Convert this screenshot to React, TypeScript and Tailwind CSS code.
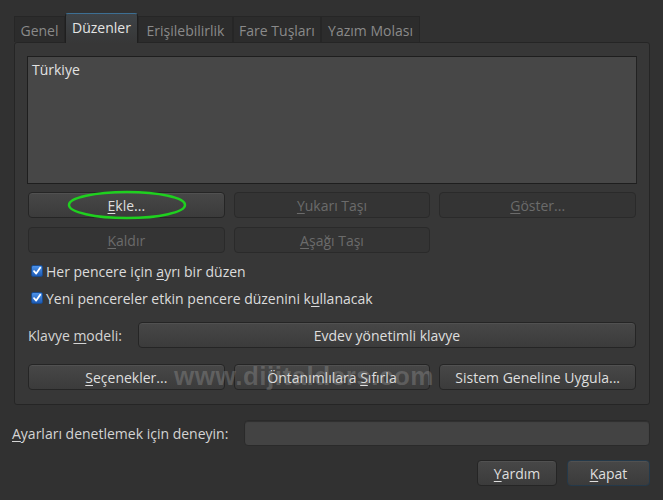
import React from "react";

const U = ({ children }: { children: React.ReactNode }) => (
  <span className="underline underline-offset-2 decoration-1">{children}</span>
);

function Btn({
  children,
  disabled,
  className = "",
}: {
  children: React.ReactNode;
  disabled?: boolean;
  className?: string;
}) {
  return (
    <div
      className={
        "h-[26px] flex items-center justify-center rounded-[4px] border text-[14px] " +
        (disabled
          ? "border-[#2a2a2a] bg-[#343434] text-[#6b6b6b] "
          : "border-[#252525] bg-gradient-to-b from-[#474747] to-[#3b3b3b] text-[#dedede] shadow-[inset_0_1px_0_rgba(255,255,255,0.06)] ") +
        className
      }
    >
      <span>{children}</span>
    </div>
  );
}

function Check({ children }: { children: React.ReactNode }) {
  return (
    <div className="h-[18px] flex items-center gap-[3px] pl-[4px]">
      <div className="w-[12px] h-[12px] rounded-[2px] bg-gradient-to-b from-[#4d92e8] to-[#1d5bb5] border border-[#1a4a8a] flex items-center justify-center">
        <svg width="10" height="10" viewBox="0 0 10 10">
          <path d="M2 5.2 L4.2 7.6 L8.2 1.8" stroke="white" strokeWidth="1.8" fill="none" strokeLinecap="round" strokeLinejoin="round" />
        </svg>
      </div>
      <span className="text-[14px] text-[#dcdcdc]">{children}</span>
    </div>
  );
}

const tabs = ["Genel", "Düzenler", "Erişilebilirlik", "Fare Tuşları", "Yazım Molası"];
const tabW = [51, 73, 95, 88, 99];

export default function App() {
  return (
    <div
      className="relative w-[663px] h-[500px] bg-[#313131] overflow-hidden"
      style={{ fontFamily: "'Open Sans', 'Noto Sans', sans-serif" }}
    >
      {/* tabs */}
      <div className="flex items-end h-[42px] pl-[14px]">
        {tabs.map((t, i) =>
          i === 1 ? (
            <div
              key={t}
              className="h-[30px] flex items-center justify-center border border-b-0 border-[#1f1f1f] border-t-[#3d6f93] rounded-t-[3px] bg-gradient-to-b from-[#3e4347] to-[#373737] text-[14px] text-[#e4e4e4] pb-[3px] -mb-[1px] relative z-10"
              style={{ width: tabW[i] }}
            >
              {t}
            </div>
          ) : (
            <div
              key={t}
              className="h-[26px] flex items-center justify-center border border-b-0 border-[#262626] bg-[#2c2c2c] text-[14px] text-[#8a8a8a] pt-[1px]"
              style={{ width: tabW[i] }}
            >
              {t}
            </div>
          )
        )}
      </div>

      {/* panel */}
      <div className="ml-[14px] mr-[13px] h-[363px] border border-[#252525] rounded-[3px] bg-[#373737] px-[12px] pt-[13px]">
        <div className="h-[128px] bg-[#474747] border border-[#1e1e1e] border-r-[#222] px-[4px] pt-[2px] text-[14px] text-[#e2e2e2]">
          Türkiye
        </div>
        <div className="grid grid-cols-3 gap-x-[9px] gap-y-[9px] mt-[8px] px-[1px]">
          <Btn>
            <U>E</U>kle...
          </Btn>
          <Btn disabled>
            <U>Y</U>ukarı Taşı
          </Btn>
          <Btn disabled>
            <U>G</U>öster...
          </Btn>
          <Btn disabled>
            <U>K</U>aldır
          </Btn>
          <Btn disabled>
            <U>A</U>şağı Taşı
          </Btn>
        </div>
        <div className="mt-[9px] flex flex-col gap-[9px]">
          <Check>
            Her pencere için <U>a</U>yrı bir düzen
          </Check>
          <Check>
            Yeni pencereler etkin pencere düzenini k<U>u</U>llanacak
          </Check>
        </div>
        <div className="mt-[15px] flex items-center pl-[1px] pr-[1px]">
          <span className="w-[110px] text-[14px] text-[#d4d4d4]">
            Klavye <U>m</U>odeli:
          </span>
          <Btn className="flex-1">Evdev yönetimli klavye</Btn>
        </div>
        <div className="grid grid-cols-3 gap-x-[9px] mt-[16px] px-[1px]">
          <Btn>
            <U>S</U>eçenekler...
          </Btn>
          <Btn>
            Öntanımlılara <U>S</U>ıfırla
          </Btn>
          <Btn>Sistem Geneline Uygula...</Btn>
        </div>
      </div>

      {/* test row */}
      <div className="mt-[15px] ml-[12px] mr-[13px] flex items-center">
        <span className="w-[232px] text-[14px] text-[#d4d4d4]">
          <U>A</U>yarları denetlemek için deneyin:
        </span>
        <div className="flex-1 h-[26px] rounded-[4px] bg-[#434343] border border-[#2a2a2a] shadow-[inset_0_1px_1px_rgba(0,0,0,0.3)]" />
      </div>

      {/* dialog buttons */}
      <div className="mt-[14px] mr-[13px] flex justify-end gap-[10px]">
        <Btn className="w-[80px]">
          <U>Y</U>ardım
        </Btn>
        <Btn className="w-[83px] !border-[#24394a] shadow-[0_0_0_1px_rgba(60,110,150,0.35)]">
          <U>K</U>apat
        </Btn>
      </div>

      {/* watermark */}
      <div
        className="absolute left-[174px] top-[357px] text-[26px] font-bold text-[#bdbdbd]/25 tracking-[0.5px] pointer-events-none"
        style={{ fontFamily: "'Liberation Sans', Arial, sans-serif" }}
      >
        www.dijitalders.com
      </div>

      {/* green ellipse */}
      <svg className="absolute left-[64px] top-[189px] pointer-events-none" width="126" height="32" viewBox="0 0 126 32">
        <ellipse cx="63" cy="16" rx="58" ry="13" fill="none" stroke="#1fd01f" strokeWidth="2.5" />
      </svg>
    </div>
  );
}
